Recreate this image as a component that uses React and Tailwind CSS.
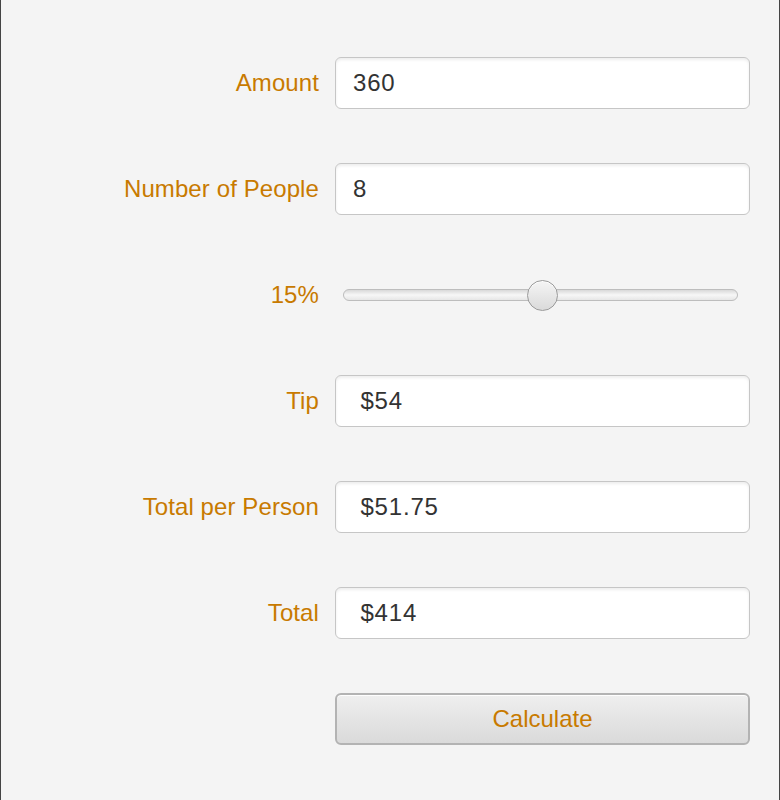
import React from 'react';

const FIELDS = [
  { label: 'Amount', value: '360' },
  { label: 'Number of People', value: '8' },
  { label: '15%', slider: 0.505 },
  { label: 'Tip', value: ' $54' },
  { label: 'Total per Person', value: ' $51.75' },
  { label: 'Total', value: ' $414' },
];

const Slider = ({ fraction }) => (
  <div className="h-[52px] flex items-center pl-2 pr-3">
    <div className="relative w-full h-[12px] rounded-full border border-[#bdbdbd] bg-gradient-to-b from-[#d9d9d9] via-[#f7f7f7] to-[#e6e6e6]">
      <div
        className="absolute top-1/2 w-[31px] h-[31px] -ml-[15.5px] -mt-[15.5px] rounded-full border-[1.5px] border-[#9a9a9a] bg-gradient-to-b from-[#f5f5f5] to-[#dadada] shadow-[inset_0_1px_0_rgba(255,255,255,0.9)]"
        style={{ left: `${fraction * 100}%` }}
      />
    </div>
  </div>
);

const Field = ({ value }) => (
  <input
    readOnly
    value={value}
    className="h-[52px] w-full rounded-[6px] border border-[#c6c6c6] bg-white pl-[17px] text-[24px] tracking-[0.8px] text-[#333333] outline-none shadow-[inset_0_2px_3px_rgba(0,0,0,0.07)]"
  />
);

export default function App() {
  return (
    <div
      className="w-[780px] min-h-[800px] bg-[#f4f4f4] border-x border-[#444444]"
      style={{ fontFamily: '"Liberation Sans", Arial, sans-serif' }}
    >
      <div className="grid grid-cols-[318px_415px] gap-x-4 gap-y-[54px] pt-[57px]">
        {FIELDS.map((f) => (
          <React.Fragment key={f.label}>
            <div className="h-[52px] flex items-center justify-end text-[24px] tracking-[0.1px] text-[#c87a00]">
              {f.label}
            </div>
            {f.slider !== undefined ? <Slider fraction={f.slider} /> : <Field value={f.value} />}
          </React.Fragment>
        ))}
        <div />
        <button
          type="button"
          className="h-[52px] w-full rounded-[6px] border-2 border-[#b3b3b3] bg-gradient-to-b from-[#efefef] to-[#dadada] text-[24px] text-[#c87a00] shadow-[inset_0_1px_0_rgba(255,255,255,0.9)]"
        >
          Calculate
        </button>
      </div>
    </div>
  );
}
